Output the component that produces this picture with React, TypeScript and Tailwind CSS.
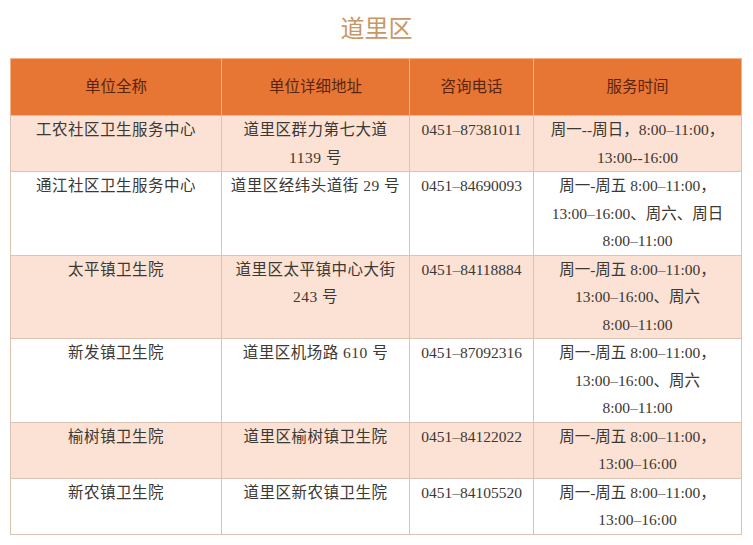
import React from 'react';

interface Row {
  name: string;
  address: string[];
  phone: string;
  hours: string[];
}

const rows: Row[] = [
  {
    name: '工农社区卫生服务中心',
    address: ['道里区群力第七大道', '1139 号'],
    phone: '0451–87381011',
    hours: ['周一--周日，8:00–11:00，', '13:00--16:00'],
  },
  {
    name: '通江社区卫生服务中心',
    address: ['道里区经纬头道街 29 号'],
    phone: '0451–84690093',
    hours: ['周一-周五 8:00–11:00，', '13:00–16:00、周六、周日', '8:00–11:00'],
  },
  {
    name: '太平镇卫生院',
    address: ['道里区太平镇中心大街', '243 号'],
    phone: '0451–84118884',
    hours: ['周一-周五 8:00–11:00，', '13:00–16:00、周六', '8:00–11:00'],
  },
  {
    name: '新发镇卫生院',
    address: ['道里区机场路 610 号'],
    phone: '0451–87092316',
    hours: ['周一-周五 8:00–11:00，', '13:00–16:00、周六', '8:00–11:00'],
  },
  {
    name: '榆树镇卫生院',
    address: ['道里区榆树镇卫生院'],
    phone: '0451–84122022',
    hours: ['周一-周五 8:00–11:00，', '13:00–16:00'],
  },
  {
    name: '新农镇卫生院',
    address: ['道里区新农镇卫生院'],
    phone: '0451–84105520',
    hours: ['周一-周五 8:00–11:00，', '13:00–16:00'],
  },
];

const headers = ['单位全称', '单位详细地址', '咨询电话', '服务时间'];

export default function App() {
  return (
    <div
      className="w-[753px] h-[545px] bg-white overflow-hidden"
      style={{ fontFamily: '"Liberation Serif", "Noto Sans CJK SC", serif' }}
    >
      {/* Title */}
      <h1 className="h-[58px] pt-[13px] text-center text-[24px] leading-[32px] text-[#c89766]">
        道里区
      </h1>

      {/* Table */}
      <table className="ml-[10px] w-[731px] border-collapse table-fixed text-[15.5px] text-[#3c3833]">
        <colgroup>
          <col className="w-[211px]" />
          <col className="w-[188px]" />
          <col className="w-[124px]" />
          <col className="w-[208px]" />
        </colgroup>
        <thead>
          <tr className="h-[57px] bg-[#e77534]">
            {headers.map((h) => (
              <th
                key={h}
                className="border border-[#f0b48e] font-normal text-[#5a2510] text-center align-middle"
              >
                {h}
              </th>
            ))}
          </tr>
        </thead>
        <tbody>
          {rows.map((r, i) => (
            <tr key={r.name} className={i % 2 === 0 ? 'bg-[#fbe2d4]' : 'bg-white'}>
              <td className="border border-[#dcc3b3] align-top text-center leading-[27.5px] tracking-[0.5px]">
                {r.name}
              </td>
              <td className="border border-[#dcc3b3] align-top text-center leading-[27.5px] tracking-[0.5px]">
                {r.address.map((a) => (
                  <div key={a}>{a}</div>
                ))}
              </td>
              <td className="border border-[#dcc3b3] align-top text-center leading-[27.5px]">
                {r.phone}
              </td>
              <td className="border border-[#dcc3b3] align-top text-center leading-[27.5px]">
                {r.hours.map((h) => (
                  <div key={h}>{h}</div>
                ))}
              </td>
            </tr>
          ))}
        </tbody>
      </table>
    </div>
  );
}
